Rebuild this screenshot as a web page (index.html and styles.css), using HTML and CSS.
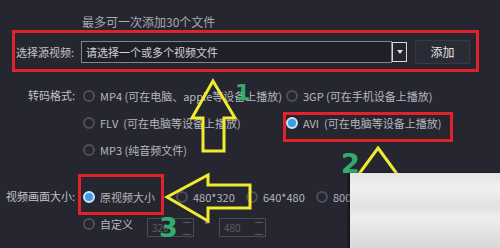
FILE: index.html
```html
<!DOCTYPE html>
<html lang="zh-CN">

<head>
    <meta charset="UTF-8">
    <title>视频转换</title>
    <link rel="stylesheet" href="styles.css">
</head>

<body>
    <div id="panel">
        <div class="hint">最多可一次添加30个文件</div>

        <!-- source file row -->
        <div class="source-row">
            <span class="label">选择源视频:</span>
            <div class="select">请选择一个或多个视频文件</div>
            <div class="drop"><span class="tri"></span></div>
            <div class="add-btn">添加</div>
        </div>

        <!-- output format -->
        <div class="field format">
            <span class="label">转码格式:</span>
            <div class="format-grid">
                <div class="opt"><span class="radio"></span>MP4 (可在电脑、apple等设备上播放)</div>
                <div class="opt"><span class="radio"></span>3GP (可在手机设备上播放)</div>
                <div class="opt"><span class="radio"></span>FLV &nbsp;(可在电脑等设备上播放)</div>
                <div class="opt"><span class="radio on"></span>AVI &nbsp;(可在电脑等设备上播放)</div>
                <div class="opt"><span class="radio"></span>MP3 (纯音频文件)</div>
            </div>
        </div>

        <!-- picture size -->
        <div class="field size">
            <span class="label">视频画面大小:</span>
            <div class="size-list">
                <div class="size-line">
                    <div class="opt first"><span class="radio on"></span>原视频大小</div>
                    <div class="opt"><span class="radio"></span>480*320</div>
                    <div class="opt"><span class="radio"></span>640*480</div>
                    <div class="opt"><span class="radio"></span>800*600</div>
                </div>
                <div class="size-line">
                    <div class="opt custom"><span class="radio"></span>自定义</div>
                    <div class="num">320<span class="spin"></span></div>
                    <span class="times">*</span>
                    <div class="num">480<span class="spin"></span></div>
                </div>
            </div>
        </div>
    </div>

    <!-- tutorial markings drawn over the screenshot -->
    <svg class="marks" width="500" height="248" viewBox="0 0 500 248">
        <rect x="13.5" y="31.5" width="464" height="39" class="box" />
        <rect x="284.5" y="113.5" width="167" height="27" class="box" />
        <rect x="79.5" y="175.5" width="83" height="38" class="box" />

        <polygon class="arrow" points="213,81 235,118 224,118 224,151 203,151 203,118 192,118" />
        <polygon class="arrow" points="378,148 400,178 390,178 390,205 366,205 366,178 356,178" />
        <polygon class="arrow" points="167,197 208,175 208,185 250,185 250,208 208,208 208,221" />

        <text x="235" y="100" class="num-mark n1">1</text>
        <text x="341" y="173" class="num-mark n2">2</text>
        <text x="159" y="237" class="num-mark n3">3</text>
    </svg>

    <div class="blur-patch"></div>
</body>

</html>
```

FILE: styles.css
```css
body {
    margin: 0;
    width: 500px;
    height: 248px;
    overflow: hidden;
    position: relative;
    background: #262630;
    font-family: "Noto Sans CJK SC", "Noto Sans", sans-serif;
    font-size: 11px;
    color: #c2c2c9;
}

.hint {
    margin-left: 82px;
    padding-top: 15px;
    font-size: 12px;
    line-height: 14px;
    color: #a9a9b1;
}

.source-row {
    display: flex;
    align-items: center;
    margin-top: 12px;
    height: 22px;
}

.label {
    width: 75px;
    text-align: right;
    flex-shrink: 0;
    white-space: nowrap;
}

.source-row .label {
    width: 59px;
    margin-left: 16px;
    text-align: left;
    margin-right: 6px;
}

.select {
    box-sizing: border-box;
    width: 311px;
    height: 22px;
    line-height: 20px;
    padding-left: 4px;
    border: 1px solid #85858f;
    background: #1f1f28;
    color: #d2d2d6;
}

.drop {
    box-sizing: border-box;
    width: 15px;
    height: 20px;
    border: 1px solid #d8d8dc;
    display: flex;
    align-items: center;
    justify-content: center;
}

.tri {
    width: 0;
    height: 0;
    border-left: 3px solid transparent;
    border-right: 3px solid transparent;
    border-top: 4px solid #e0e0e4;
}

.add-btn {
    box-sizing: border-box;
    margin-left: 8px;
    width: 55px;
    height: 24px;
    line-height: 22px;
    text-align: center;
    background: #2b2b36;
    border: 1px solid #393945;
    color: #e2e2e6;
    font-size: 12px;
}

.field {
    display: flex;
    align-items: flex-start;
}

.field .label {
    line-height: 27px;
    margin-right: 8px;
}

.format {
    margin-top: 19px;
}

.format-grid {
    display: grid;
    grid-template-columns: 203px auto;
    grid-auto-rows: 27px;
}

.opt {
    display: flex;
    align-items: center;
    white-space: nowrap;
    color: #b6b6be;
}

.radio {
    box-sizing: border-box;
    width: 12px;
    height: 12px;
    border-radius: 50%;
    border: 2px solid #4e4e59;
    margin-right: 5px;
    flex-shrink: 0;
}

.radio.on {
    border: 2px solid #cfe3f5;
    background: #3d9be9;
}

.size {
    margin-top: 20px;
}

.size-line {
    display: flex;
    align-items: center;
    height: 27px;
}

.size-line .opt {
    width: 70px;
}

.size-line .opt.first {
    width: 93px;
}

.size-line .opt.custom {
    width: 64px;
}

.num {
    box-sizing: border-box;
    position: relative;
    margin-top: 8px;
    width: 47px;
    height: 19px;
    line-height: 17px;
    padding-left: 4px;
    border: 1px solid #4a4a55;
    color: #5e5e69;
    font-size: 10px;
}

.spin {
    position: absolute;
    right: 2px;
    top: 3px;
    width: 8px;
    height: 11px;
    border-top: 1px solid #5a5a64;
    border-bottom: 1px solid #5a5a64;
}

.times {
    width: 25px;
    text-align: center;
    color: #9a9aa2;
}

.marks {
    position: absolute;
    left: 0;
    top: 0;
}

.box {
    fill: none;
    stroke: #e3212b;
    stroke-width: 3;
}

.arrow {
    fill: none;
    stroke: #f2ea2e;
    stroke-width: 3;
    stroke-linejoin: miter;
}

.num-mark {
    fill: #33ad6e;
    font-family: "DejaVu Sans", sans-serif;
    font-weight: bold;
}

.n1 {
    font-size: 22px;
}

.n2,
.n3 {
    font-size: 27px;
}

.blur-patch {
    position: absolute;
    left: 350px;
    top: 173px;
    width: 150px;
    height: 75px;
    background: linear-gradient(180deg, #e4e4e4 0%, #f0f0f0 20%, #e2e2e2 45%, #ededed 60%, #d8d8d8 100%);
    box-shadow: -2px 0 2px rgba(0, 0, 0, 0.5);
}
```
